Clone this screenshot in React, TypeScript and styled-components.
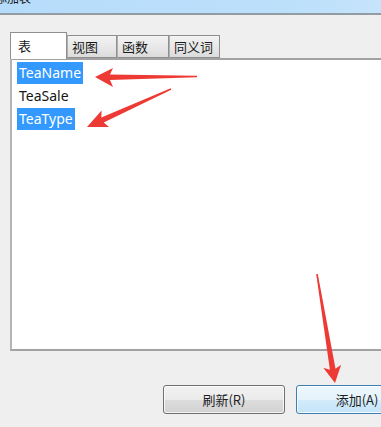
import { FC } from "react";
import styled, { createGlobalStyle } from "styled-components";

const GlobalStyle = createGlobalStyle`
  html, body {
    margin: 0;
    padding: 0;
    background: #f0eff0;
    overflow: hidden;
  }
  body {
    font-family: "Noto Sans", "Noto Sans CJK SC", sans-serif;
  }
`;

const SWindow = styled.div`
  position: relative;
  width: 381px;
  height: 427px;
  overflow: hidden;
  background: #f0eff0;
`;

const STitleBar = styled.div`
  height: 13px;
  overflow: hidden;
  background: linear-gradient(90deg, #b6dcfb 0%, #bde0fb 80%, #c6e4fb 100%);
  border-bottom: 2px solid #939ba3;
`;

const STitleText = styled.div`
  margin: -10px 0 0 -5px;
  font-family: "Noto Sans CJK SC", sans-serif;
  font-size: 12px;
  line-height: 16px;
  color: #1b1b1b;
`;

const SBody = styled.div`
  padding: 17px 0 0 10px;
`;

const STabs = styled.div`
  display: flex;
  align-items: flex-end;
  height: 26px;
  position: relative;
  z-index: 1;
`;

const STab = styled.div<{ $active?: boolean; $w: number }>`
  box-sizing: border-box;
  width: ${(p) => p.$w}px;
  height: ${(p) => (p.$active ? 27 : 23)}px;
  margin-bottom: ${(p) => (p.$active ? -1 : 0)}px;
  padding: ${(p) => (p.$active ? "4px 0 0 7px" : "2px 0 0 4px")};
  border: 1px solid #8f8f8f;
  border-bottom: ${(p) => (p.$active ? "none" : "1px solid #8f8f8f")};
  border-left-color: ${(p) => (p.$active ? "#8f8f8f" : "#b0b0b0")};
  background: ${(p) =>
    p.$active ? "#ffffff" : "linear-gradient(#f3f3f3, #e6e6e6 60%, #dbdbdb)"};
  font-family: "Noto Sans CJK SC", sans-serif;
  font-size: 13px;
  line-height: 17px;
  color: #1a1a1a;
`;

const SListPane = styled.div`
  box-sizing: border-box;
  width: 380px;
  height: 293px;
  padding: 2px 0 0 5px;
  background: #ffffff;
  border-top: 2px solid #a2a2a2;
  border-left: 2px solid #b4b4b4;
  border-bottom: 2px solid #a2a2a2;
`;

const SItem = styled.div`
  display: flex;
  height: 23px;
  align-items: flex-start;
`;

const SItemText = styled.span<{ $selected?: boolean }>`
  padding: 1px 2px 2px 2px;
  font-size: 14px;
  line-height: 19px;
  color: ${(p) => (p.$selected ? "#ffffff" : "#151515")};
  background: ${(p) => (p.$selected ? "#3399ff" : "transparent")};
`;

const SButtons = styled.div`
  display: flex;
  gap: 11px;
  padding: 34px 0 0 153px;
`;

const SButton = styled.button<{ $focused?: boolean }>`
  flex-shrink: 0;
  width: 122px;
  height: 29px;
  padding: 0;
  border-radius: 3px;
  border: 1px solid ${(p) => (p.$focused ? "#3c7fb1" : "#707070")};
  box-shadow: inset 0 0 0 1px rgba(255, 255, 255, 0.75);
  background: ${(p) =>
    p.$focused
      ? "linear-gradient(#eef7fd, #e4f3fc 50%, #d3ecfb 51%, #c4e4f7)"
      : "linear-gradient(#f2f2f2, #ebebeb 50%, #dddddd 51%, #d2d2d2)"};
  font-family: "Noto Sans CJK SC", sans-serif;
  font-size: 13px;
  color: #1e1e1e;
`;

const SOverlay = styled.svg`
  position: absolute;
  left: 0;
  top: 0;
  pointer-events: none;
`;

const tabs = [
  { label: "表", w: 57, active: true },
  { label: "视图", w: 50 },
  { label: "函数", w: 52 },
  { label: "同义词", w: 51 },
];

const items = [
  { name: "TeaName", selected: true },
  { name: "TeaSale", selected: false },
  { name: "TeaType", selected: true },
];

const Arrows: FC = () => (
  <SOverlay width="381" height="427" viewBox="0 0 381 427">
    <g fill="#ee3a35">
      <polygon points="95,77 113,68 110,74.5 197,75.8 197,77.2 110,80 113,87" />
      <polygon points="87,127 101.6,110.5 101.3,117.4 170.7,88.3 171.3,89.7 103.7,122.6 109,126.9" />
      <polygon points="335,383 323.3,367.7 329.9,369.7 316.2,274.1 317.8,273.9 335.5,368.7 341.1,364.7" />
    </g>
  </SOverlay>
);

export default function App() {
  return (
    <>
      <GlobalStyle />
      <SWindow>
        <STitleBar>
          <STitleText>添加表</STitleText>
        </STitleBar>
        <SBody>
          <STabs>
            {tabs.map((t) => (
              <STab key={t.label} $active={t.active} $w={t.w}>
                {t.label}
              </STab>
            ))}
          </STabs>
          <SListPane>
            {items.map((it) => (
              <SItem key={it.name}>
                <SItemText $selected={it.selected}>{it.name}</SItemText>
              </SItem>
            ))}
          </SListPane>
          <SButtons>
            <SButton>刷新(R)</SButton>
            <SButton $focused>添加(A)</SButton>
          </SButtons>
        </SBody>
        <Arrows />
      </SWindow>
    </>
  );
}
